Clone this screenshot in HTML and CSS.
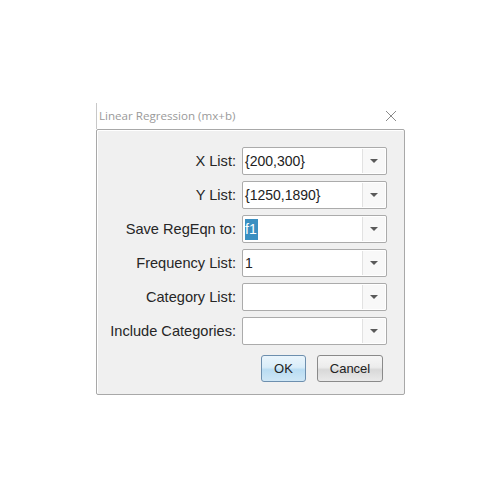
FILE: index.html
```html
<!DOCTYPE html>
<html>
<head>
<meta charset="utf-8">
<link rel="stylesheet" href="styles.css">
</head>
<body>
<div class="window">
  <div class="titlebar">
    <span class="title">Linear Regression (mx+b)</span>
    <svg class="close" width="12" height="12" viewBox="0 0 12 12"><path d="M1 1L11 11M11 1L1 11" stroke="#8a8a8a" stroke-width="1" fill="none"/></svg>
  </div>
  <div class="panel">
    <div class="form">
      <label class="lbl">X List:</label>
      <div class="combo"><span class="val">{200,300}</span><span class="drop"><i class="arrow"></i></span></div>
      <label class="lbl">Y List:</label>
      <div class="combo"><span class="val">{1250,1890}</span><span class="drop"><i class="arrow"></i></span></div>
      <label class="lbl">Save RegEqn to:</label>
      <div class="combo"><span class="val"><span class="sel">f1</span></span><span class="drop"><i class="arrow"></i></span></div>
      <label class="lbl">Frequency List:</label>
      <div class="combo"><span class="val">1</span><span class="drop"><i class="arrow"></i></span></div>
      <label class="lbl">Category List:</label>
      <div class="combo"><span class="val"></span><span class="drop"><i class="arrow"></i></span></div>
      <label class="lbl">Include Categories:</label>
      <div class="combo"><span class="val"></span><span class="drop"><i class="arrow"></i></span></div>
    </div>
    <div class="buttons">
      <button class="btn ok">OK</button>
      <button class="btn cancel">Cancel</button>
    </div>
  </div>
</div>
</body>
</html>
```
FILE: styles.css
```css
html, body {
  margin: 0;
  padding: 0;
  background: #ffffff;
}
body {
  font-family: "Liberation Sans", Arial, sans-serif;
  color: #222;
}
.window {
  margin: 103px 0 0 96px;
  width: 309px;
}
.titlebar {
  height: 26px;
  border-left: 1px solid #c8c8c8;
  display: flex;
  align-items: center;
  justify-content: space-between;
  padding-left: 2px;
  padding-right: 8px;
  box-sizing: border-box;
}
.title {
  font-family: "Open Sans", "Liberation Sans", sans-serif;
  font-size: 11.6px;
  color: #9a9a9a;
  margin-top: -1px;
}
.close {
  display: block;
  margin-top: -1px;
}
.panel {
  height: 266px;
  box-sizing: border-box;
  background: #f0f0f0;
  border: 1px solid #a8a8a8;
  border-radius: 2px;
  box-shadow: inset 1px 1px 0 #ffffff;
  padding-top: 17px;
}
.form {
  display: grid;
  grid-template-columns: 139px 145px;
  column-gap: 6px;
  row-gap: 6px;
}
.lbl {
  font-size: 14.6px;
  text-align: right;
  align-self: center;
  white-space: nowrap;
  color: #262626;
}
.combo {
  height: 28px;
  box-sizing: border-box;
  border: 1px solid #ababab;
  border-radius: 2px;
  background: #fff;
  display: flex;
  align-items: stretch;
}
.val {
  flex: 1;
  font-size: 14px;
  padding-left: 2px;
  display: flex;
  align-items: center;
  color: #222;
}
.sel {
  background: #3a8fc1;
  color: #fff;
  padding: 2px 1px 2px 0;
  line-height: 17px;
}
.drop {
  width: 22px;
  border-left: 1px solid #e2e2e2;
  background: #f8f8f8;
  display: flex;
  align-items: center;
  justify-content: center;
  margin: 1px 1px 1px 0;
}
.arrow {
  width: 0;
  height: 0;
  border-left: 4px solid transparent;
  border-right: 4px solid transparent;
  border-top: 4px solid #5a5a5a;
}
.buttons {
  display: flex;
  justify-content: flex-end;
  gap: 11px;
  padding-right: 21px;
  margin-top: 10px;
}
.btn {
  height: 27px;
  box-sizing: border-box;
  font-family: "Liberation Sans", Arial, sans-serif;
  font-size: 13px;
  color: #222;
  border-radius: 3px;
  padding: 0;
}
.ok {
  width: 45px;
  border: 1px solid #6d8fae;
  background: linear-gradient(#eaf5fc 0%, #d9edf9 45%, #b9dcf2 55%, #cfe7f6 100%);
}
.cancel {
  width: 66px;
  border: 1px solid #8a8a8a;
  background: linear-gradient(#f6f6f6 0%, #ececec 45%, #d8d8d8 55%, #e9e9e9 100%);
}
```
